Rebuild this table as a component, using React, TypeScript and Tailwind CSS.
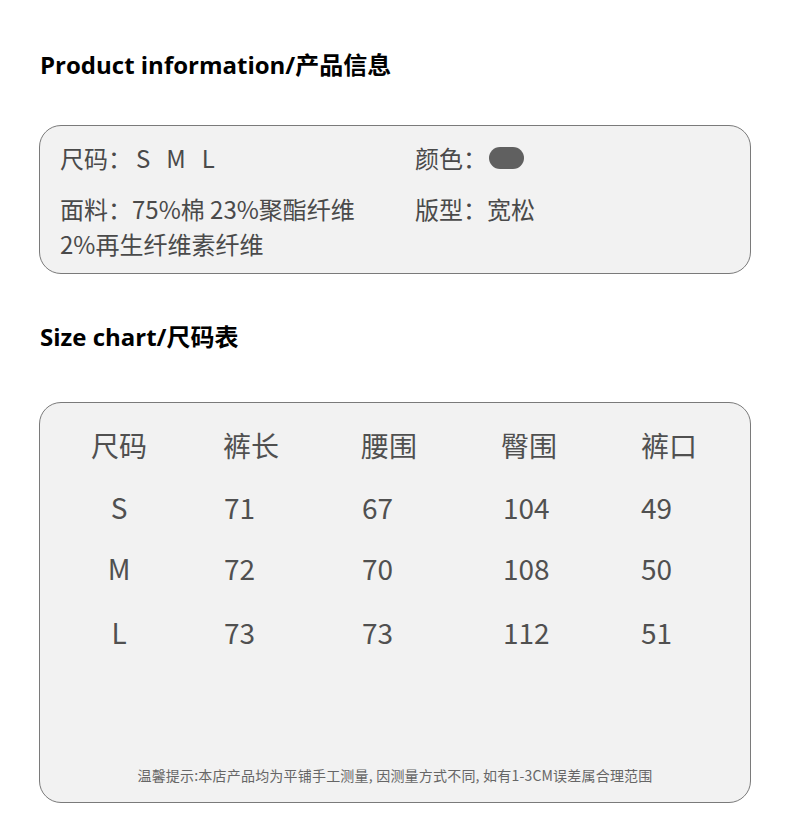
import React from "react";

const cjk = "font-['Noto_Sans_CJK_SC','Noto_Sans',sans-serif]";
const head = "font-['Open_Sans','Noto_Sans_CJK_SC',sans-serif]";

const sizes = [
  { size: "S", length: "71", waist: "67", hip: "104", hem: "49" },
  { size: "M", length: "72", waist: "70", hip: "108", hem: "50" },
  { size: "L", length: "73", waist: "73", hip: "112", hem: "51" },
];

export default function App() {
  return (
    <main className={`w-[790px] h-[837px] bg-white ${cjk} overflow-hidden`}>
      {/* product info */}
      <section className="px-[39px] pt-[48px]">
        <h2 className={`${head} text-[24px] font-bold text-black leading-[34px] pl-[1px]`}>
          Product information/产品信息
        </h2>
        <div className="mt-[43px] w-[712px] h-[149px] rounded-[22px] border border-[#7a7a7a] bg-[#f2f2f2] pl-[20px] pt-[16px] text-[24px] text-[#4a4a4a] leading-[31px]">
          <div className="grid grid-cols-[355px_1fr]">
            <div className="flex">
              尺码：<span className="ml-[4px]">S</span>
              <span className="ml-[16px]">M</span>
              <span className="ml-[16px]">L</span>
            </div>
            <div className="flex items-center">
              颜色：
              <span className="ml-[2px] inline-block w-[35px] h-[22px] rounded-full bg-[#606060]" />
            </div>
          </div>
          <div className="grid grid-cols-[355px_1fr] mt-[18px] leading-[35px]">
            <div>
              <div>面料：75%棉 23%聚酯纤维</div>
              <div>2%再生纤维素纤维</div>
            </div>
            <div>版型：宽松</div>
          </div>
        </div>
      </section>

      {/* size chart */}
      <section className="px-[39px] pt-[46px]">
        <h2 className={`${head} text-[24px] font-bold text-black leading-[34px] pl-[1px]`}>
          Size chart/尺码表
        </h2>
        <div className="mt-[48px] w-[712px] h-[401px] rounded-[22px] border border-[#7a7a7a] bg-[#f2f2f2] flex flex-col">
          <div className="grid grid-cols-[132px_138px_140px_140px_1fr] pl-[51px] pt-[23px] text-[28px] text-[#505050] leading-[38px]">
            <div>尺码</div>
            <div>裤长</div>
            <div>腰围</div>
            <div>臀围</div>
            <div>裤口</div>
          </div>
          <div className="flex flex-col mt-[24px] pl-[51px]">
            {sizes.map((r, i) => (
              <div
                key={r.size}
                className={`grid grid-cols-[132px_138px_140px_140px_1fr] text-[28px] text-[#505050] leading-[38px] ${
                  i === 0 ? "" : i === 1 ? "mt-[23px]" : "mt-[26px]"
                }`}
              >
                <div className="w-[56px] text-center">{r.size}</div>
                <div className="pl-[1px]">{r.length}</div>
                <div className="pl-[1px]">{r.waist}</div>
                <div className="pl-[2px]">{r.hip}</div>
                <div>{r.hem}</div>
              </div>
            ))}
          </div>
          <p className="mt-auto mb-[17px] text-center text-[14px] text-[#666] leading-[20px] tracking-[0.2px]">
            温馨提示:本店产品均为平铺手工测量, 因测量方式不同, 如有1-3CM误差属合理范围
          </p>
        </div>
      </section>
    </main>
  );
}
